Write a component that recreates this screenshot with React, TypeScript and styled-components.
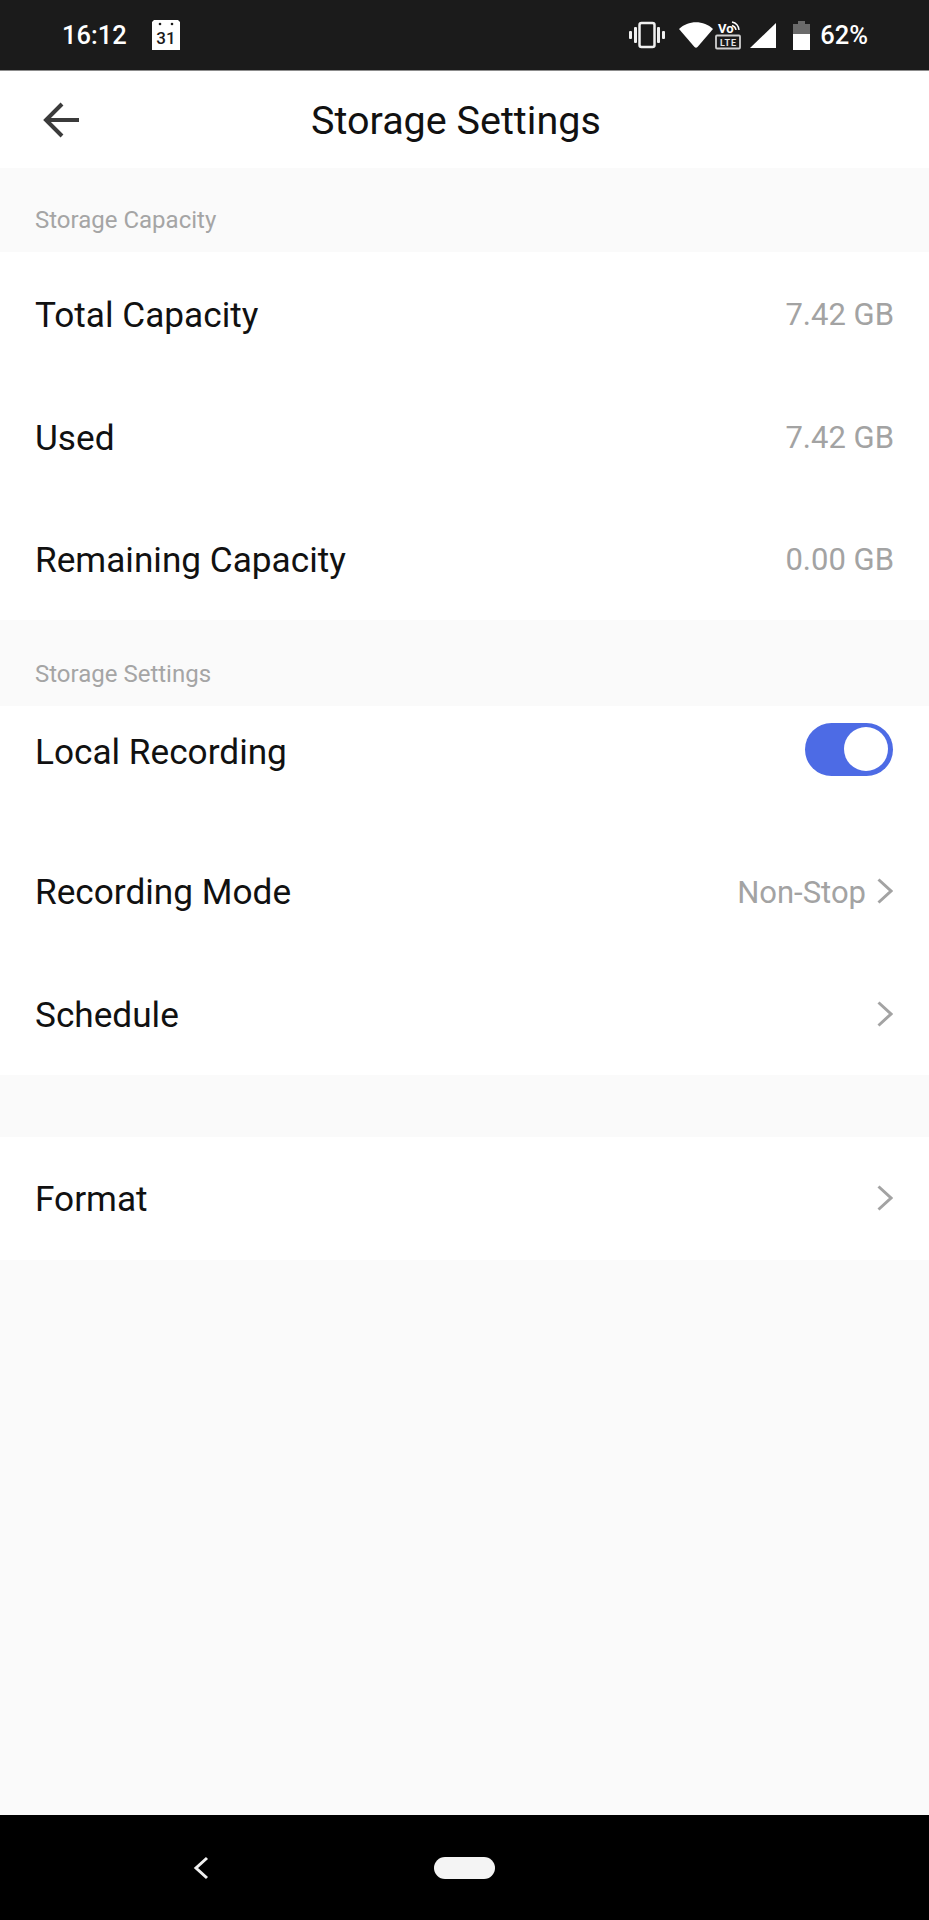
import styled, { createGlobalStyle } from 'styled-components'

const GlobalStyle = createGlobalStyle`
    html, body {
        margin: 0;
        padding: 0;
        background: #fafafa;
    }
    * {
        box-sizing: border-box;
    }
`

const Screen = styled.div`
    width: 929px;
    height: 1920px;
    display: flex;
    flex-direction: column;
    background: #fafafa;
    font-family: Roboto, 'Liberation Sans', sans-serif;
    overflow: hidden;
`

const StatusBar = styled.div`
    height: 71px;
    flex: none;
    display: flex;
    align-items: center;
    justify-content: space-between;
    padding: 0 61px 0 62px;
    background: #1b1b1b;
    border-bottom: 1px solid #8c8c8c;
    color: #fff;
    font-size: 25.5px;
    font-weight: 500;
`

const StatusGroup = styled.div`
    display: flex;
    align-items: center;
`

const StatusIcon = styled.svg<{ $gap?: number }>`
    flex: none;
    margin-left: ${(p) => p.$gap ?? 0}px;
`

const BatteryText = styled.span`
    margin-left: 10px;
`

const CalendarDay = styled.text`
    font-family: Roboto, sans-serif;
    font-size: 17px;
    font-weight: 500;
    fill: #1b1b1b;
`

const LteLabel = styled.text`
    font-family: Roboto, sans-serif;
    font-size: 9px;
    font-weight: 700;
    letter-spacing: 0.8px;
    fill: #e6e6e6;
`

const VoLabel = styled.text`
    font-family: Roboto, sans-serif;
    font-size: 13px;
    font-weight: 700;
    fill: #fff;
`

const Header = styled.div`
    height: 97px;
    flex: none;
    display: flex;
    align-items: center;
    background: #fff;
    padding: 0 0 0 43px;
`

const BackButton = styled.svg`
    width: 38px;
    height: 38px;
    flex: none;
`

const Title = styled.div`
    margin: 2px 0 0 230px;
    font-size: 39.5px;
    color: #111;
`

const SectionLabel = styled.div<{ $height: number }>`
    height: ${(p) => p.$height}px;
    padding: 0 35px 18px;
    display: flex;
    align-items: flex-end;
    font-size: 24px;
    color: #a5a5a5;
`

const Group = styled.div`
    background: #fff;
`

const Row = styled.div`
    height: 122.6px;
    display: flex;
    align-items: center;
    justify-content: space-between;
    padding: 0 35px;
`

const ToggleRow = styled(Row)`
    height: 124px;
    align-items: flex-start;
    padding-top: 17px;
`

const RowLabel = styled.div<{ $raised?: boolean }>`
    padding-top: ${(p) => (p.$raised ? 2 : 4)}px;
    font-size: 35.2px;
    color: #111;
`

const ToggleLabel = styled(RowLabel)`
    margin-top: 4px;
`

const RowValue = styled.div`
    display: flex;
    align-items: center;
    gap: 11px;
    padding-top: 3px;
    font-size: 31px;
    color: #a3a3a3;
`

const ChevronIcon = styled.svg`
    flex: none;
    margin: -3px 1px 0 0;
`

const Toggle = styled.div`
    width: 88px;
    height: 53px;
    border-radius: 27px;
    background: #4d6be5;
    display: flex;
    justify-content: flex-end;
    align-items: center;
    padding-right: 5px;
    margin-right: 1px;
`

const ToggleKnob = styled.div`
    width: 44px;
    height: 44px;
    border-radius: 50%;
    background: #fff;
`

const Spacer = styled.div`
    height: 62px;
`

const Fill = styled.div`
    flex: 1;
`

const NavBar = styled.div`
    height: 105px;
    flex: none;
    background: #000;
    display: flex;
    align-items: center;
    padding: 0 0 0 193px;
`

const NavPill = styled.div`
    width: 61px;
    height: 22px;
    border-radius: 11px;
    background: #f4f4f4;
    margin-left: 225px;
`

const Chevron = () => (
    <ChevronIcon width="16" height="26" viewBox="0 0 16 26" fill="none">
        <path d="M1.5 1.5 L14 13 L1.5 24.5" stroke="#a3a3a3" strokeWidth="3" />
    </ChevronIcon>
)

const App = () => (
    <Screen>
        <GlobalStyle />
        <StatusBar>
            <StatusGroup>
                16:12
                <StatusIcon $gap={24} width="30" height="32" viewBox="0 0 30 32">
                    <path d="M3 1 H27 L29 3 V31 H1 V3 Z" fill="#fff" />
                    <circle cx="9" cy="5" r="1.3" fill="#1b1b1b" />
                    <circle cx="21" cy="5" r="1.3" fill="#1b1b1b" />
                    <CalendarDay x="15" y="25" textAnchor="middle">
                        31
                    </CalendarDay>
                </StatusIcon>
            </StatusGroup>
            <StatusGroup>
                <StatusIcon width="37" height="28" viewBox="0 0 37 28">
                    <rect x="10.5" y="2" width="15" height="24" rx="2" fill="none" stroke="#f0f0f0" strokeWidth="2.5" />
                    <rect x="5" y="6" width="3" height="16" rx="1" fill="#f0f0f0" />
                    <rect x="28" y="6" width="3" height="16" rx="1" fill="#f0f0f0" />
                    <rect x="0" y="10" width="3" height="8" rx="1" fill="#f0f0f0" />
                    <rect x="33" y="10" width="3" height="8" rx="1" fill="#f0f0f0" />
                </StatusIcon>
                <StatusIcon $gap={13} width="34" height="28" viewBox="0 0 34 28">
                    <path d="M0 8 C9 -1 25 -1 34 8 L18.5 26 Q17 27.5 15.5 26 Z" fill="#fff" />
                </StatusIcon>
                <StatusIcon $gap={2} width="27" height="30" viewBox="0 0 27 30">
                    <VoLabel x="3" y="13">
                        Vo
                    </VoLabel>
                    <path d="M17 2 A9 9 0 0 1 24 10 M17 5.5 A5.5 5.5 0 0 1 21 10" fill="none" stroke="#fff" strokeWidth="1.4" />
                    <rect x="1" y="15.5" width="24" height="13" rx="1" fill="none" stroke="#d0d0d0" strokeWidth="1.8" />
                    <LteLabel x="13.4" y="25.5" textAnchor="middle">
                        LTE
                    </LteLabel>
                </StatusIcon>
                <StatusIcon $gap={8} width="27" height="27" viewBox="0 0 27 27">
                    <path d="M0 26 L26 1 V26 Z" fill="#fff" />
                </StatusIcon>
                <StatusIcon $gap={16} width="17" height="29" viewBox="0 0 17 29">
                    <path d="M5 0 H12 V3 H17 V13 H0 V3 H5 Z" fill="#6b6b6b" />
                    <path d="M0 13 H17 V29 H0 Z" fill="#fff" />
                </StatusIcon>
                <BatteryText>62%</BatteryText>
            </StatusGroup>
        </StatusBar>
        <Header>
            <BackButton viewBox="0 0 38 38" fill="none">
                <path d="M36 19 H4 M19 3 L3 19 L19 35" stroke="#3b3b3b" strokeWidth="4" />
            </BackButton>
            <Title>Storage Settings</Title>
        </Header>
        <SectionLabel $height={84}>Storage Capacity</SectionLabel>
        <Group>
            <Row>
                <RowLabel>Total Capacity</RowLabel>
                <RowValue>7.42 GB</RowValue>
            </Row>
            <Row>
                <RowLabel>Used</RowLabel>
                <RowValue>7.42 GB</RowValue>
            </Row>
            <Row>
                <RowLabel>Remaining Capacity</RowLabel>
                <RowValue>0.00 GB</RowValue>
            </Row>
        </Group>
        <SectionLabel $height={86}>Storage Settings</SectionLabel>
        <Group>
            <ToggleRow>
                <ToggleLabel>Local Recording</ToggleLabel>
                <Toggle>
                    <ToggleKnob />
                </Toggle>
            </ToggleRow>
            <Row>
                <RowLabel $raised>Recording Mode</RowLabel>
                <RowValue>
                    Non-Stop
                    <Chevron />
                </RowValue>
            </Row>
            <Row>
                <RowLabel $raised>Schedule</RowLabel>
                <RowValue>
                    <Chevron />
                </RowValue>
            </Row>
        </Group>
        <Spacer />
        <Group>
            <Row>
                <RowLabel $raised>Format</RowLabel>
                <RowValue>
                    <Chevron />
                </RowValue>
            </Row>
        </Group>
        <Fill />
        <NavBar>
            <svg width="16" height="24" viewBox="0 0 16 24" fill="none">
                <path d="M14 2 L3 12 L14 22" stroke="#f0f0f0" strokeWidth="3" />
            </svg>
            <NavPill />
        </NavBar>
    </Screen>
)

export default App
